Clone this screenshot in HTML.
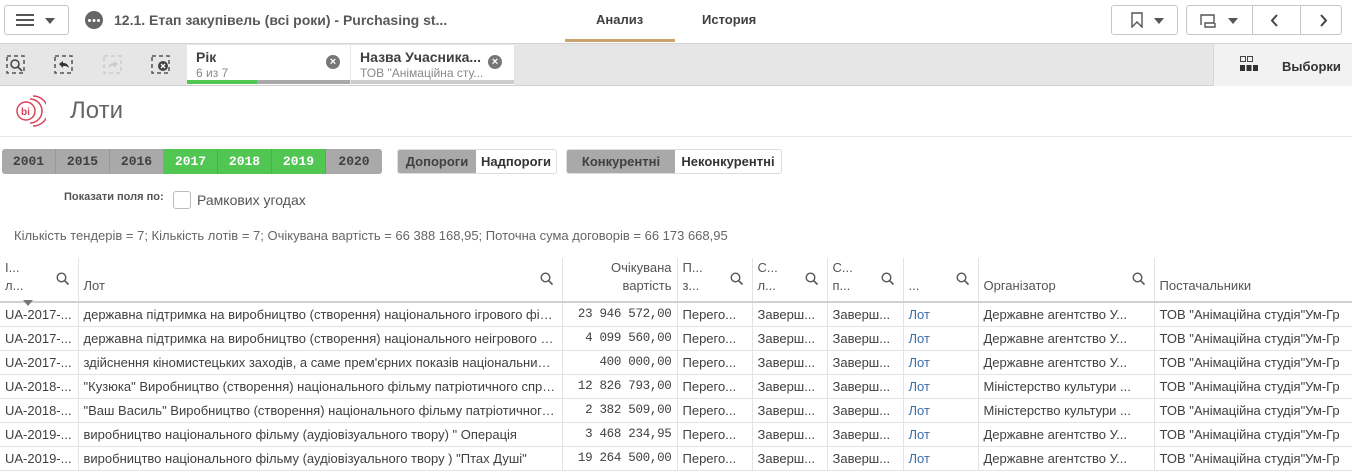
<!DOCTYPE html>
<html><head><meta charset="utf-8"><style>
*{box-sizing:border-box;margin:0;padding:0}
body{width:1352px;height:472px;overflow:hidden;background:#fff;font-family:"Liberation Sans",sans-serif;color:#404040;position:relative}
.abs{position:absolute}
.btn{position:absolute;border:1px solid #c6c6c6;border-radius:3px;background:#fff;height:30px;top:5px}
.tri{display:block;width:0;height:0;border-left:5px solid transparent;border-right:5px solid transparent;border-top:6px solid #555}
.yr{position:absolute;top:149px;height:25px;width:54px;font:bold 13px "Liberation Mono",monospace;text-align:center;line-height:25px;color:#404040;background:#a9a9a9;border-right:1px solid #999}
.g{background:#52c652;color:#fff;border-right:1px solid #4cb04c}
table{position:absolute;top:258px;left:0;width:1352px;border-collapse:collapse;table-layout:fixed;font-size:13px}
td{height:24px;border-bottom:1px solid #e3e3e3;border-right:1px solid #e3e3e3;padding:0 5px;white-space:nowrap;overflow:hidden;text-overflow:ellipsis;color:#404040}
th{height:44px;border-bottom:2px solid #d0d0d0;border-right:1px solid #e3e3e3;font-weight:normal;text-align:left;padding:0 5px;vertical-align:bottom;padding-bottom:6px;position:relative;font-size:13px;color:#555;white-space:nowrap;overflow:hidden;line-height:18px}
th svg{position:absolute;right:8px;top:14px}
.r{text-align:right;font-family:"Liberation Mono",monospace;font-size:12.5px;letter-spacing:-0.3px}
.l{color:#3a6fa8}
</style></head><body>
<svg width="0" height="0" style="position:absolute"><defs><symbol id="q" viewBox="0 0 14 14"><circle cx="5.5" cy="5.5" r="4.3" fill="none" stroke="#555" stroke-width="1.4"/><path d="M8.7 8.7L12.5 12.5" stroke="#555" stroke-width="1.6"/></symbol></defs></svg>
<!-- top bar -->
<div class="btn" style="left:4px;width:65px"><div class="abs" style="left:11px;top:8px;width:18px;height:2px;background:#555;box-shadow:0 5px 0 #555,0 10px 0 #555"></div><div class="abs" style="left:40px;top:12px"><span class="tri"></span></div></div>
<div class="abs" style="left:85px;top:11px;width:18px;height:18px;border-radius:50%;background:#666"><div class="abs" style="left:3px;top:7.5px;width:3px;height:3px;border-radius:50%;background:#fff;box-shadow:4.5px 0 0 #fff,9px 0 0 #fff"></div></div>
<div class="abs" style="left:114px;top:12px;font-weight:bold;font-size:14px;color:#595959">12.1. Етап закупівель (всі роки) - Purchasing st...</div>
<div class="abs" style="left:596px;top:12px;font-weight:bold;font-size:13px;color:#404040">Анализ</div>
<div class="abs" style="left:565px;top:39px;width:110px;height:3px;background:#c9a46e"></div>
<div class="abs" style="left:702px;top:12px;font-weight:bold;font-size:13px;color:#404040">История</div>
<div class="btn" style="left:1111px;width:67px"><svg class="abs" style="left:19px;top:6px" width="12" height="16"><path d="M1 1h10v14l-5-5-5 5z" fill="none" stroke="#555" stroke-width="1.4"/></svg><div class="abs" style="left:42px;top:12px"><span class="tri"></span></div></div>
<div class="btn" style="left:1186px;width:156px"><svg class="abs" style="left:12px;top:8px" width="18" height="14"><path d="M2 11V1h13v8H6v4h10v-4" fill="none" stroke="#555" stroke-width="1.4"/></svg><div class="abs" style="left:41px;top:12px"><span class="tri"></span></div><div class="abs" style="left:65px;top:0;width:1px;height:28px;background:#c6c6c6"></div><div class="abs" style="left:113px;top:0;width:1px;height:28px;background:#c6c6c6"></div><svg class="abs" style="left:83px;top:8px" width="10" height="13"><path d="M7 1L2 6.5 7 12" fill="none" stroke="#444" stroke-width="2"/></svg><svg class="abs" style="left:131px;top:8px" width="10" height="13"><path d="M3 1l5 5.5L3 12" fill="none" stroke="#444" stroke-width="2"/></svg></div>
<div class="abs" style="left:0;top:43px;width:1352px;height:1px;background:#d4d4d4"></div>
<!-- toolbar -->
<div class="abs" style="left:0;top:44px;width:1352px;height:42px;background:#e6e6e6;border-bottom:1px solid #d0d0d0"></div>
<svg class="abs" style="left:6px;top:55px" width="20" height="20"><rect x="1" y="1" width="17" height="17" fill="none" stroke="#555" stroke-width="1.5" stroke-dasharray="4 3"/><circle cx="9" cy="9" r="4" fill="none" stroke="#444" stroke-width="1.5"/><path d="M12 12l4 4" stroke="#444" stroke-width="1.6"/></svg>
<svg class="abs" style="left:54px;top:55px" width="20" height="20"><rect x="1" y="1" width="17" height="17" fill="none" stroke="#555" stroke-width="1.5" stroke-dasharray="4 3"/><path d="M5 9l4-3v2c3 0 5 1 6 5-2-2-3-2-6-2v2z" fill="#333"/></svg>
<svg class="abs" style="left:103px;top:55px" width="20" height="20"><rect x="1" y="1" width="17" height="17" fill="none" stroke="#ccc" stroke-width="1.5" stroke-dasharray="4 3"/><path d="M15 9l-4-3v2c-3 0-5 1-6 5 2-2 3-2 6-2v2z" fill="#ccc"/></svg>
<svg class="abs" style="left:151px;top:55px" width="20" height="20"><rect x="1" y="1" width="17" height="17" fill="none" stroke="#555" stroke-width="1.5" stroke-dasharray="4 3"/><circle cx="12" cy="11" r="5" fill="#444"/><path d="M10 9l4 4M14 9l-4 4" stroke="#fff" stroke-width="1.3"/></svg>
<div class="abs" style="left:187px;top:45px;width:163px;height:40px;background:#fff"><div class="abs" style="left:9px;top:4px;font-weight:bold;font-size:14px;color:#404040">Рік</div><div class="abs" style="left:9px;top:21px;font-size:12px;color:#888">6 из 7</div><div class="abs" style="left:139px;top:10px;width:14px;height:14px;border-radius:50%;background:#777;color:#fff;font-size:11px;line-height:14px;text-align:center;font-weight:bold">×</div><div class="abs" style="left:0;top:35px;width:70px;height:4px;background:#52c652"></div><div class="abs" style="left:70px;top:35px;width:93px;height:4px;background:#a9a9a9"></div></div>
<div class="abs" style="left:351px;top:45px;width:163px;height:40px;background:#fff"><div class="abs" style="left:9px;top:4px;font-weight:bold;font-size:14px;color:#404040">Назва Учасника...</div><div class="abs" style="left:9px;top:21px;font-size:12px;color:#888">ТОВ "Анімаційна сту...</div><div class="abs" style="left:137px;top:10px;width:14px;height:14px;border-radius:50%;background:#777;color:#fff;font-size:11px;line-height:14px;text-align:center;font-weight:bold">×</div><div class="abs" style="left:0;top:35px;width:163px;height:4px;background:#ccc"></div></div>
<div class="abs" style="left:1213px;top:44px;width:139px;height:42px;background:#f2f2f2;border-left:1px solid #d8d8d8"></div>
<svg class="abs" style="left:1239px;top:55px" width="20" height="20"><rect x="1.5" y="1.5" width="5" height="5" fill="none" stroke="#444"/><rect x="8.5" y="1.5" width="5" height="5" fill="none" stroke="#444"/><rect x="1" y="10" width="5" height="6" fill="#333"/><rect x="7.5" y="10" width="5" height="6" fill="#333"/><rect x="14" y="10" width="5" height="6" fill="#333"/></svg>
<div class="abs" style="left:1282px;top:59px;font-weight:bold;font-size:13px;color:#333">Выборки</div>
<!-- title -->
<svg class="abs" style="left:10px;top:93px" width="36" height="36"><circle cx="16" cy="18" r="9" fill="none" stroke="#d9425a" stroke-width="1.5"/><path d="M20 6a12 12 0 0 1 0 24M23 3a15 15 0 0 1 0 30" fill="none" stroke="#d9425a" stroke-width="1.5"/><text x="11" y="22" font-size="10" font-weight="bold" fill="#d9425a" font-family="Liberation Sans">bi</text></svg>
<div class="abs" style="left:70px;top:97px;font-size:24px;color:#666">Лоти</div>
<div class="abs" style="left:0;top:136px;width:1352px;height:1px;background:#e6e6e6"></div>
<!-- years -->
<div class="yr" style="left:2px;border-radius:3px 0 0 3px">2001</div><div class="yr" style="left:56px">2015</div><div class="yr" style="left:110px">2016</div><div class="yr g" style="left:164px">2017</div><div class="yr g" style="left:218px">2018</div><div class="yr g" style="left:272px">2019</div><div class="yr" style="left:326px;width:56px;border-radius:0 3px 3px 0;border:none">2020</div>
<div class="abs" style="left:397px;top:149px;width:160px;height:25px;border:1px solid #ddd;border-radius:3px;overflow:hidden;font-weight:bold;font-size:13px;line-height:23px"><div class="abs" style="left:0;top:0;width:78px;height:25px;background:#a9a9a9;text-align:center">Допороги</div><div class="abs" style="left:78px;top:0;width:80px;text-align:center;color:#333">Надпороги</div></div>
<div class="abs" style="left:566px;top:149px;width:216px;height:25px;border:1px solid #ddd;border-radius:3px;overflow:hidden;font-weight:bold;font-size:13px;line-height:23px"><div class="abs" style="left:0;top:0;width:108px;height:25px;background:#a9a9a9;text-align:center">Конкурентні</div><div class="abs" style="left:108px;top:0;width:106px;text-align:center;color:#333">Неконкурентні</div></div>
<div class="abs" style="left:64px;top:191px;font-size:11px;font-weight:bold;color:#555">Показати поля по:</div>
<div class="abs" style="left:173px;top:191px;width:18px;height:18px;border:1px solid #bbb;border-radius:3px"></div>
<div class="abs" style="left:197px;top:192px;font-size:14px;color:#555">Рамкових угодах</div>
<div class="abs" style="left:14px;top:228px;font-size:13px;color:#666">Кількість тендерів = 7; Кількість лотів = 7; Очікувана вартість = 66 388 168,95; Поточна сума договорів = 66 173 668,95</div>
<!-- table -->
<table>
<colgroup><col style="width:78px"><col style="width:484px"><col style="width:115px"><col style="width:75px"><col style="width:75px"><col style="width:76px"><col style="width:75px"><col style="width:176px"><col style="width:198px"></colgroup>
<tr><th>І...<br>л...<svg width="14" height="14"><use href="#q"/></svg></th><th>Лот<svg width="14" height="14"><use href="#q"/></svg></th><th style="text-align:right">Очікувана<br>вартість</th><th>П...<br>з...<svg width="14" height="14"><use href="#q"/></svg></th><th>С...<br>л...<svg width="14" height="14"><use href="#q"/></svg></th><th>С...<br>п...<svg width="14" height="14"><use href="#q"/></svg></th><th>...<svg width="14" height="14"><use href="#q"/></svg></th><th>Організатор<svg width="14" height="14"><use href="#q"/></svg></th><th style="border-right:none">Постачальники</th></tr>
<tr><td>UA-2017-...</td><td>державна підтримка на виробництво (створення) національного ігрового фільму</td><td class="r">23 946 572,00</td><td>Перего...</td><td>Заверш...</td><td>Заверш...</td><td class="l">Лот</td><td>Державне агентство У...</td><td style="text-overflow:clip">ТОВ "Анімаційна студія"Ум-Гр</td></tr>
<tr><td>UA-2017-...</td><td>державна підтримка на виробництво (створення) національного неігрового фільму</td><td class="r">4 099 560,00</td><td>Перего...</td><td>Заверш...</td><td>Заверш...</td><td class="l">Лот</td><td>Державне агентство У...</td><td style="text-overflow:clip">ТОВ "Анімаційна студія"Ум-Гр</td></tr>
<tr><td>UA-2017-...</td><td>здійснення кіномистецьких заходів, а саме прем'єрних показів національних фільмів</td><td class="r">400 000,00</td><td>Перего...</td><td>Заверш...</td><td>Заверш...</td><td class="l">Лот</td><td>Державне агентство У...</td><td style="text-overflow:clip">ТОВ "Анімаційна студія"Ум-Гр</td></tr>
<tr><td>UA-2018-...</td><td>"Кузюка" Виробництво (створення) національного фільму патріотичного спрямування</td><td class="r">12 826 793,00</td><td>Перего...</td><td>Заверш...</td><td>Заверш...</td><td class="l">Лот</td><td>Міністерство культури ...</td><td style="text-overflow:clip">ТОВ "Анімаційна студія"Ум-Гр</td></tr>
<tr><td>UA-2018-...</td><td>"Ваш Василь" Виробництво (створення) національного фільму патріотичного спрямування</td><td class="r">2 382 509,00</td><td>Перего...</td><td>Заверш...</td><td>Заверш...</td><td class="l">Лот</td><td>Міністерство культури ...</td><td style="text-overflow:clip">ТОВ "Анімаційна студія"Ум-Гр</td></tr>
<tr><td>UA-2019-...</td><td>виробництво національного фільму (аудіовізуального твору) " Операція</td><td class="r">3 468 234,95</td><td>Перего...</td><td>Заверш...</td><td>Заверш...</td><td class="l">Лот</td><td>Державне агентство У...</td><td style="text-overflow:clip">ТОВ "Анімаційна студія"Ум-Гр</td></tr>
<tr><td>UA-2019-...</td><td>виробництво національного фільму (аудіовізуального твору ) "Птах Душі"</td><td class="r">19 264 500,00</td><td>Перего...</td><td>Заверш...</td><td>Заверш...</td><td class="l">Лот</td><td>Державне агентство У...</td><td style="text-overflow:clip">ТОВ "Анімаційна студія"Ум-Гр</td></tr>
</table>
<div class="abs" style="left:23px;top:300px;width:0;height:0;border-left:5px solid transparent;border-right:5px solid transparent;border-top:6px solid #777"></div>
</body></html>
